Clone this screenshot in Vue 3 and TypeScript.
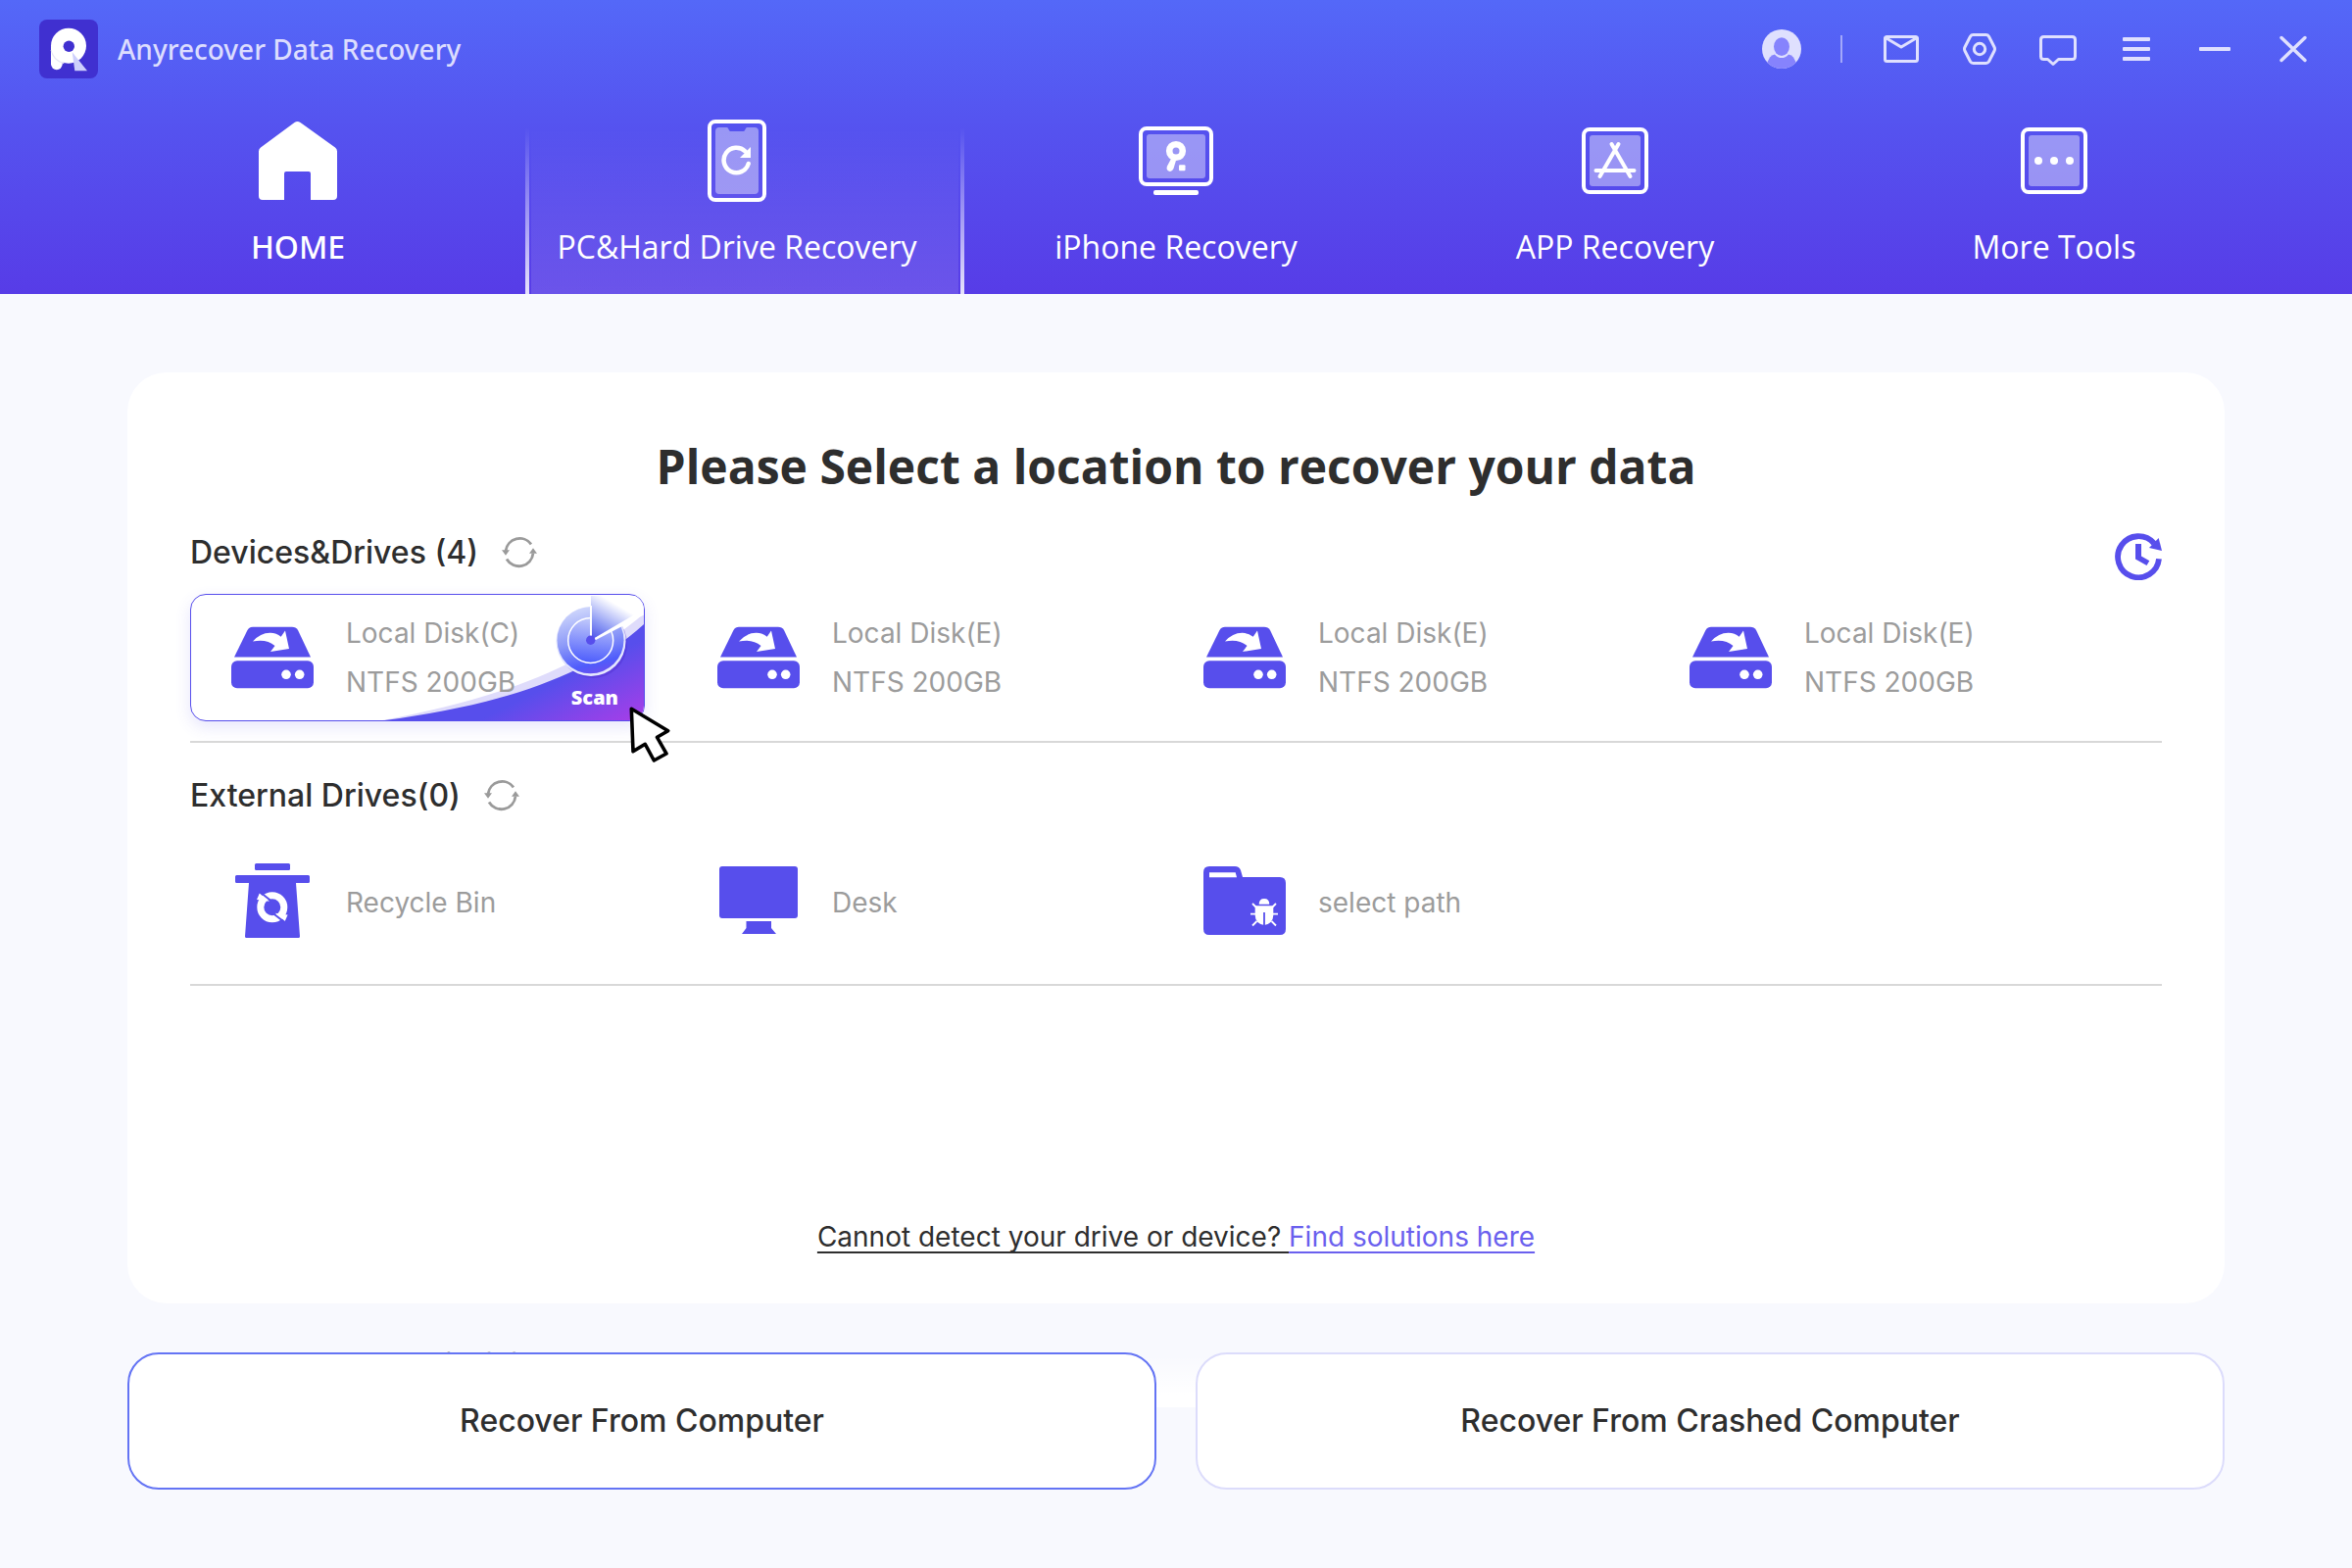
<script setup lang="ts">
type NavIcon = 'home' | 'pc' | 'iphone' | 'app' | 'more'
type PlaceIcon = 'bin' | 'desk' | 'folder'

interface NavItem {
  label: string
  icon: NavIcon
  active?: boolean
}
interface Disk {
  name: string
  info: string
  selected?: boolean
}
interface Place {
  name: string
  icon: PlaceIcon
}

const navItems: NavItem[] = [
  { label: 'HOME', icon: 'home' },
  { label: 'PC&Hard Drive Recovery', icon: 'pc', active: true },
  { label: 'iPhone Recovery', icon: 'iphone' },
  { label: 'APP Recovery', icon: 'app' },
  { label: 'More Tools', icon: 'more' },
]

const disks: Disk[] = [
  { name: 'Local Disk(C)', info: 'NTFS 200GB', selected: true },
  { name: 'Local Disk(E)', info: 'NTFS 200GB' },
  { name: 'Local Disk(E)', info: 'NTFS 200GB' },
  { name: 'Local Disk(E)', info: 'NTFS 200GB' },
]

const places: Place[] = [
  { name: 'Recycle Bin', icon: 'bin' },
  { name: 'Desk', icon: 'desk' },
  { name: 'select path', icon: 'folder' },
]
</script>

<template>
  <div class="app">
    <header class="header">
      <div class="titlebar">
        <svg class="logo" width="60" height="60" viewBox="0 0 60 60" aria-hidden="true">
          <rect width="60" height="60" rx="8" fill="#4030d0" />
          <path d="M12 27V45.300a5.800 5.800 0 0 0 11.700 0V38z" fill="#fff" />
          <path d="M12.300 31a18 18 0 0 0 13 13.500" fill="none" stroke="#e6e6f4" stroke-width="1.500" />
          <circle cx="30" cy="26.700" r="18" fill="#fff" />
          <circle cx="30.300" cy="27.300" r="5.700" fill="#4030d0" />
          <path d="M33.700 33.300 49 52.300H36.300z" fill="#cdcffc" />
        </svg>
        <span class="product">Anyrecover Data Recovery</span>
        <div class="tools">
          <button type="button" aria-label="Account">
            <svg width="40" height="40" viewBox="0 0 40 40">
              <clipPath id="avatarClip"><circle cx="20" cy="20" r="20" /></clipPath>
              <circle cx="20" cy="20" r="20" fill="#dfe0fe" />
              <g clip-path="url(#avatarClip)">
                <path d="M4 36 8 28.500Q10 26 13 25.500H27Q30 26 32 28.500L36 36V42H4z" fill="#8683fd" />
                <ellipse cx="20" cy="17.600" rx="9.600" ry="11.400" fill="#dfe0fe" />
                <ellipse cx="20" cy="17.600" rx="8" ry="9.300" fill="#8683fd" />
              </g>
            </svg>
          </button>
          <span class="separator"></span>
          <button type="button" aria-label="Mail">
            <svg class="line" width="40" height="40" viewBox="0 0 40 40">
              <rect x="3.500" y="7.500" width="33" height="25" rx="2" />
              <path d="M4 8.500 20 18 36 8.500" />
            </svg>
          </button>
          <button type="button" aria-label="Settings">
            <svg class="line" width="40" height="40" viewBox="0 0 40 40">
              <path d="M13.500 5.500H26.500Q28.500 5.500 29.500 7.200L35 18Q36 20 35 22L29.500 32.800Q28.500 34.500 26.500 34.500H13.500Q11.500 34.500 10.500 32.800L5 22Q4 20 5 18L10.500 7.200Q11.500 5.500 13.500 5.500z" />
              <circle cx="20" cy="20" r="5.700" />
            </svg>
          </button>
          <button type="button" aria-label="Feedback">
            <svg class="line" width="40" height="40" viewBox="0 0 40 40">
              <path d="M5.500 7.500H34.500Q37.500 7.500 37.500 10.500V27.500Q37.500 30.500 34.500 30.500H20.500L15 35.500 9.500 30.500H5.500Q2.500 30.500 2.500 27.500V10.500Q2.500 7.500 5.500 7.500z" />
            </svg>
          </button>
          <button type="button" aria-label="Menu">
            <svg width="40" height="40" viewBox="0 0 40 40" fill="#dfe0fe">
              <rect x="6" y="8" width="28" height="4" rx="1" />
              <rect x="6" y="18" width="28" height="4" rx="1" />
              <rect x="6" y="28" width="28" height="4" rx="1" />
            </svg>
          </button>
          <button type="button" aria-label="Minimize">
            <svg width="40" height="40" viewBox="0 0 40 40" fill="#dfe0fe">
              <rect x="4" y="18" width="32" height="4" rx="1" />
            </svg>
          </button>
          <button type="button" aria-label="Close">
            <svg class="line" width="40" height="40" viewBox="0 0 40 40">
              <path d="M8 8.500 32 31.500M32 8.500 8 31.500" stroke-width="3.500" />
            </svg>
          </button>
        </div>
      </div>

      <nav class="nav">
        <a
          v-for="item in navItems"
          :key="item.label"
          href="#"
          class="nav-item"
          :class="{ active: item.active, home: item.icon === 'home' }"
        >
          <span class="nav-icon">
            <svg v-if="item.icon === 'home'" width="80" height="80" viewBox="0 0 80 80">
              <path
                d="M36.500 1Q39.500-1 42.500 1L78 26.500Q80 28 80 30.500V76Q80 80 76 80H53V53Q53 51 51 51H28Q26 51 26 53V80H4Q0 80 0 76V30.500Q0 28 2 26.500z"
                fill="#fff"
              />
            </svg>
            <svg v-else-if="item.icon === 'pc'" width="60" height="84" viewBox="0 0 60 84">
              <rect x="2" y="2" width="56" height="80" rx="6" fill="none" stroke="#fff" stroke-width="4" />
              <path d="M12 8H19.500Q20.500 8 21 9L22 11Q22.500 12 23.500 12H36.500Q37.500 12 38 11L39 9Q39.500 8 40.500 8H48Q52 8 52 12V72Q52 76 48 76H12Q8 76 8 72V12Q8 8 12 8z" fill="#fff" fill-opacity=".4" />
              <path d="M41.700 45A12.800 12.800 0 1 1 38.500 32.500" fill="none" stroke="#fff" stroke-width="4.500" stroke-linecap="round" />
              <path d="M44 28V39H33z" fill="#fff" />
            </svg>
            <svg v-else-if="item.icon === 'iphone'" width="76" height="70" viewBox="0 0 76 70">
              <rect x="2" y="2" width="72" height="57" rx="6" fill="none" stroke="#fff" stroke-width="4" />
              <rect x="8" y="8" width="60" height="45" rx="3" fill="#fff" fill-opacity=".4" />
              <circle cx="38" cy="25" r="6.800" fill="none" stroke="#fff" stroke-width="6.600" />
              <path d="M33.500 32 29 40.500Q27.500 44.500 31 45.800 34 46.500 35.500 43L38.500 33z" fill="#fff" />
              <rect x="41" y="39.300" width="6.500" height="6" rx="1" fill="#fff" />
              <rect x="15" y="65" width="46" height="5" rx="2" fill="#fff" />
            </svg>
            <svg v-else-if="item.icon === 'app'" width="68" height="68" viewBox="0 0 68 68">
              <rect x="2" y="2" width="64" height="64" rx="6" fill="none" stroke="#fff" stroke-width="4" />
              <rect x="8" y="8" width="52" height="52" rx="3" fill="#fff" fill-opacity=".4" />
              <path d="M30.500 17 49.500 50M37.500 17 18.500 50M14.500 44H53.500" fill="none" stroke="#fff" stroke-width="4" stroke-linecap="round" />
            </svg>
            <svg v-else width="68" height="68" viewBox="0 0 68 68">
              <rect x="2" y="2" width="64" height="64" rx="6" fill="none" stroke="#fff" stroke-width="4" />
              <rect x="8" y="8" width="52" height="52" rx="3" fill="#fff" fill-opacity=".4" />
              <g fill="#fff">
                <circle cx="18" cy="34" r="4" />
                <circle cx="34" cy="34" r="4" />
                <circle cx="50" cy="34" r="4" />
              </g>
            </svg>
          </span>
          <span class="nav-label">{{ item.label }}</span>
        </a>
      </nav>
    </header>

    <main class="content">
      <section class="panel">
        <h1>Please Select a location to recover your data</h1>

        <div class="section-head">
          <h2>Devices&amp;Drives (4)</h2>
          <button type="button" class="refresh" aria-label="Refresh devices">
            <svg width="36" height="32" viewBox="0 0 36 32">
              <path d="M4 14A14.500 14.500 0 0 1 30 7.300M5 22.500A14.500 14.500 0 0 0 32 16.500" fill="none" stroke="#9a9a9a" stroke-width="2.800" />
              <path d="M0 13.300H8L4 18.700zM28 16.700H36L32 11.300z" fill="#9a9a9a" />
            </svg>
          </button>
          <button type="button" class="history" aria-label="Scan history">
            <svg width="48" height="48" viewBox="0 0 48 48">
              <path d="M45 26.300A21 21 0 1 1 40 10.500" fill="none" stroke="#574eec" stroke-width="5.800" />
              <path d="M44.700 5 48 18 35 15z" fill="#574eec" />
              <path d="M21 11H27V23.500L35.300 28.300 32.500 33 21 26.500z" fill="#574eec" />
            </svg>
          </button>
        </div>

        <div class="grid">
          <button v-for="(disk, i) in disks" :key="i" type="button" class="tile" :class="{ selected: disk.selected }">
            <span v-if="disk.selected" class="scan">
              <svg width="272" height="128" viewBox="191 1 272 128" aria-hidden="true">
                <defs>
                  <linearGradient id="swoosh" gradientUnits="userSpaceOnUse" x1="375" y1="75" x2="412" y2="150">
                    <stop offset=".15" stop-color="#574eec" />
                    <stop offset="1" stop-color="#a53ee8" />
                  </linearGradient>
                  <linearGradient id="dial" x1=".35" y1="0" x2=".6" y2="1">
                    <stop offset="0" stop-color="#d0d8fc" />
                    <stop offset=".5" stop-color="#8b98f8" />
                    <stop offset=".85" stop-color="#4f5cfb" />
                    <stop offset="1" stop-color="#6a50f0" />
                  </linearGradient>
                  <linearGradient id="dialCore" x1=".5" y1="0" x2=".4" y2="1">
                    <stop offset="0" stop-color="#c3cbfb" />
                    <stop offset="1" stop-color="#4c5cfc" />
                  </linearGradient>
                  <linearGradient id="beam" gradientUnits="userSpaceOnUse" x1="410" y1="47" x2="432" y2="9">
                    <stop offset="0" stop-color="#4a50e8" />
                    <stop offset=".4" stop-color="#8a97f4" />
                    <stop offset="1" stop-color="#fff" />
                  </linearGradient>
                </defs>
                <path d="M191 130C300 110 395 80 464 19V130z" fill="#dfdcfb" />
                <path d="M191 130C300 116 400 90 464 30V130z" fill="url(#swoosh)" />
                <circle cx="411" cy="51" r="35" fill="#4a22c4" opacity=".3" />
                <circle cx="409" cy="48.500" r="35.500" fill="#e4e6fe" />
                <circle cx="408.500" cy="47.300" r="34" fill="url(#dial)" />
                <circle cx="408.700" cy="47.500" r="23" fill="url(#dialCore)" stroke="#fff" stroke-width="1.500" />
                <path d="M409 47V2H464V17z" fill="url(#beam)" />
                <path d="M409 47V12" stroke="#fff" stroke-width="2" />
                <path d="M411 46 464 15V21L414 47z" fill="#fff" />
                <circle cx="408.700" cy="47.300" r="4.700" fill="#574eec" />
              </svg>
              <span class="scan-label">Scan</span>
            </span>
            <svg class="tile-icon" width="84" height="64" viewBox="0 0 84 64" aria-hidden="true">
              <path d="M3 31.500 16.500 4Q18.500.7 22 .7H62Q66 .7 68 4L81 31.500z" fill="#574eec" />
              <rect y="35.300" width="84" height="28" rx="6" fill="#574eec" />
              <path d="M22 15.500Q30 6.500 40 6.800 46 7 50.700 10.800L55 4.500 59 23 40 26 44.500 20Q36 12.500 22 15.500z" fill="#fff" />
              <circle cx="56" cy="49.300" r="4.800" fill="#fff" />
              <circle cx="69.700" cy="49.300" r="4.800" fill="#fff" />
            </svg>
            <span class="tile-text">
              <span>{{ disk.name }}</span>
              <span>{{ disk.info }}</span>
            </span>
            <svg v-if="disk.selected" class="pointer" width="44" height="60" viewBox="0 0 44 60" aria-hidden="true">
              <path d="M3.300 4.300 40.700 26.700 29.500 33.300 39 50 26.300 57 17.300 40.300 5 47.700z" fill="#fff" stroke="#000" stroke-width="3.600" stroke-linejoin="round" />
            </svg>
          </button>
        </div>
        <hr />

        <div class="section-head">
          <h2>External Drives(0)</h2>
          <button type="button" class="refresh" aria-label="Refresh external drives">
            <svg width="36" height="32" viewBox="0 0 36 32">
              <path d="M4 14A14.500 14.500 0 0 1 30 7.300M5 22.500A14.500 14.500 0 0 0 32 16.500" fill="none" stroke="#9a9a9a" stroke-width="2.800" />
              <path d="M0 13.300H8L4 18.700zM28 16.700H36L32 11.300z" fill="#9a9a9a" />
            </svg>
          </button>
        </div>

        <div class="grid">
          <button v-for="place in places" :key="place.name" type="button" class="tile place">
            <svg v-if="place.icon === 'bin'" class="tile-icon" width="84" height="76" viewBox="-4 0 84 76" aria-hidden="true">
              <rect x="20" width="36" height="7" rx="1.500" fill="#574eec" />
              <path d="M1.500 12H74.500Q76 12 76 13.500V18.500Q76 20 74.500 20H62L66 74.500Q66 76 64.500 76H11.500Q10 76 10 74.500L14 20H1.500Q0 20 0 18.500V13.500Q0 12 1.500 12z" fill="#574eec" />
              <circle cx="37.800" cy="44.700" r="12" fill="none" stroke="#fff" stroke-width="7" />
              <path d="M22 37 24.800 30.500 35 38.700z" fill="#fff" />
              <path d="M53.600 52.400 50.800 59 40.600 50.700z" fill="#fff" />
              <path d="M25.300 29.300 37 38.500M38.600 50.900 50.300 60.100" stroke="#574eec" stroke-width="1.900" />
            </svg>
            <svg v-else-if="place.icon === 'desk'" class="tile-icon" width="84" height="70" viewBox="-2 0 84 70" aria-hidden="true">
              <rect width="80" height="53" rx="3" fill="#574eec" />
              <path d="M27.500 56H53V63L58 69H23L27.500 63z" fill="#574eec" />
            </svg>
            <svg v-else class="tile-icon" width="84" height="70" viewBox="0 0 84 70" aria-hidden="true">
              <path d="M0 6Q0 0 6 0H32Q36.500 0 38 4L40 11H78Q84 11 84 17V64Q84 70 78 70H6Q0 70 0 64z" fill="#574eec" />
              <path d="M6 6.300H32.700L34 11.300H6z" fill="#fff" />
              <path d="M56.700 38.700Q56.700 33 62 33T67.300 38.700zM52.700 40.300H71.300V50Q71 58.500 62 60 53 58.500 52.700 50z" fill="#fff" />
              <path d="M48 48.700H53M71 48.700H76M50 38 54 42M74 38 70 42M50 60.500 54.500 56M74 60.500 69.500 56" stroke="#fff" stroke-width="1.800" />
              <path d="M62 47V60" stroke="#574eec" stroke-width="1.800" />
            </svg>
            <span class="tile-text">
              <span>{{ place.name }}</span>
            </span>
          </button>
        </div>
        <hr />

        <p class="help">
          <span>Cannot detect your drive or device? </span><a href="#">Find solutions here</a>
        </p>
      </section>

      <div class="modes">
        <div class="underlay" aria-hidden="true">
          <span>Local Disk(C)</span>
        </div>
        <button type="button" class="mode current">Recover From Computer</button>
        <button type="button" class="mode">Recover From Crashed Computer</button>
      </div>
    </main>
  </div>
</template>

<style>
body {
  background: #f8f9fe;
}
</style>

<style scoped>
.app {
  --accent: #574eec;
  --ui: Inter, 'Noto Sans CJK SC', sans-serif;
  --brand: 'Open Sans', 'Noto Sans', sans-serif;
  --brand-medium: 'Noto Sans', 'Open Sans', sans-serif;
  display: flex;
  flex-direction: column;
  min-height: 100vh;
  font-family: var(--ui);
  color: #2e2e2e;
}
button {
  padding: 0;
  border: 0;
  background: none;
  font: inherit;
  color: inherit;
  cursor: pointer;
}
svg {
  display: block;
  flex: none;
}

.header {
  background: linear-gradient(180deg, #5468f8 0%, #5552ef 45%, #573ce7 100%);
  font-family: var(--brand);
}
.titlebar {
  display: flex;
  align-items: center;
  height: 100px;
  padding: 0 40px;
}
.product {
  margin-left: 20px;
  font-family: var(--brand-medium);
  font-size: 28px;
  line-height: 40px;
  font-weight: 500;
  color: #dcddfe;
}
.tools {
  display: flex;
  align-items: center;
  gap: 40px;
  margin-left: auto;
}
.separator {
  width: 2px;
  height: 28px;
  background: #a3a8fa;
}
.line {
  fill: none;
  stroke: #dfe0fe;
  stroke-width: 3;
  stroke-linejoin: round;
  stroke-linecap: round;
}

.nav {
  display: flex;
  padding: 0 80px;
}
.nav-item {
  position: relative;
  flex: 1 1 0;
  display: flex;
  flex-direction: column;
  align-items: center;
  gap: 24px;
  height: 200px;
  padding-top: 22px;
  box-sizing: border-box;
  color: #fff;
  text-decoration: none;
}
.nav-icon {
  display: flex;
  align-items: center;
  height: 84px;
}
.nav-label {
  font-size: 32px;
  line-height: 44px;
  white-space: nowrap;
}
.home .nav-label {
  font-family: var(--brand-medium);
  font-weight: 500;
}
.active::before {
  content: '';
  position: absolute;
  inset: 30px -8px 0 8px;
  background:
    linear-gradient(180deg, rgba(255, 255, 255, 0), rgba(255, 255, 255, 0.85)) left / 4px 100% no-repeat,
    linear-gradient(180deg, rgba(255, 255, 255, 0), rgba(255, 255, 255, 0.85)) right / 4px 100% no-repeat,
    linear-gradient(180deg, rgba(255, 255, 255, 0), rgba(255, 255, 255, 0.12)) center / calc(100% - 12px) 100% no-repeat;
}

.content {
  padding: 80px 130px;
}
.panel {
  padding: 64px 64px 48px;
  border-radius: 40px;
  background: #fff;
}
h1 {
  margin: 0 0 36px;
  font-family: var(--brand);
  font-size: 48px;
  line-height: 64px;
  font-weight: 700;
  text-align: center;
}
.section-head {
  display: flex;
  align-items: center;
  height: 40px;
  margin-bottom: 22px;
}
h2 {
  margin: 0;
  font-size: 32px;
  line-height: 40px;
  font-weight: 500;
}
.refresh {
  margin-left: 24px;
}
.history {
  margin: 8px 0 0 auto;
}
.grid {
  display: grid;
  grid-template-columns: repeat(4, 1fr);
  gap: 32px;
  padding-right: 60px;
}
.tile {
  position: relative;
  display: flex;
  align-items: center;
  gap: 33px;
  height: 130px;
  padding: 0 41px;
  border: 1px solid transparent;
  border-radius: 16px;
  text-align: left;
}
.tile-text {
  position: relative;
  display: flex;
  flex-direction: column;
  font-size: 28px;
  line-height: 50px;
  font-weight: 400;
  color: #9c9c9c;
  white-space: nowrap;
}
.place .tile-text {
  padding-top: 4px;
}
.selected {
  border-color: var(--accent);
  background: #fff;
  box-shadow: 0 6px 16px rgba(87, 78, 236, 0.14);
}
.scan {
  position: absolute;
  inset: 0;
  display: flex;
  justify-content: flex-end;
  align-items: flex-end;
  border-radius: 15px;
  overflow: hidden;
}
.scan-label {
  position: absolute;
  right: 26px;
  bottom: 9px;
  font-family: var(--brand);
  font-size: 20px;
  line-height: 28px;
  font-weight: 800;
  color: #fff;
}
.pointer {
  position: absolute;
  right: -28px;
  bottom: -44px;
  z-index: 1;
}
hr {
  height: 2px;
  margin: 20px 0 34px;
  border: 0;
  background: #d8d8d8;
}
.help {
  margin: 236px 0 0;
  font-size: 28px;
  line-height: 40px;
  font-weight: 400;
  text-align: center;
  white-space: pre-wrap;
}
.help span,
.help a {
  text-decoration: underline;
  text-decoration-thickness: 2px;
  text-underline-offset: 5px;
  text-decoration-skip-ink: none;
}
.help a {
  color: #6a60ee;
}

.modes {
  position: relative;
  display: flex;
  gap: 40px;
  margin-top: 50px;
}
.mode {
  position: relative;
  flex: 1 1 0;
  height: 140px;
  border: 2px solid #dcdcfb;
  border-radius: 32px;
  background: #fff;
  font-size: 32px;
  line-height: 40px;
  font-weight: 500;
}
.current {
  border-color: #6474f4;
}
.underlay {
  position: absolute;
  inset: -10px 64px 84px;
  padding-left: 161px;
  background: linear-gradient(180deg, rgba(255, 255, 255, 0) 20%, #fff 80%);
  font-size: 28px;
  line-height: 42px;
  font-weight: 400;
  color: #9c9c9c;
}
</style>
